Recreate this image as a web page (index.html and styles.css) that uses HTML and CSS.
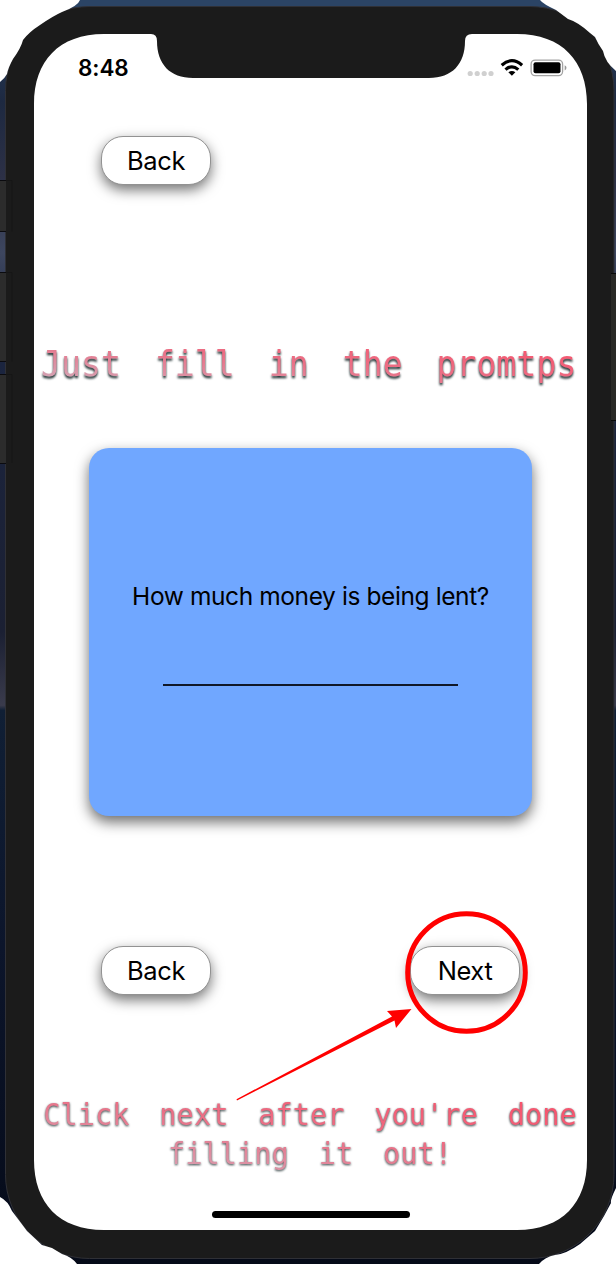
FILE: index.html
```html
<!DOCTYPE html>
<html lang="en">
<head>
<meta charset="utf-8">
<title>Lending prompts</title>
<link rel="stylesheet" href="styles.css">
</head>
<body>
<div class="stage">
  <svg class="device" viewBox="0 0 616 1264" aria-hidden="true">
    <defs>
      <linearGradient id="wall" x1="0" y1="0" x2="0" y2="1">
        <stop offset="0" stop-color="#2b4465"/>
        <stop offset=".08" stop-color="#1d2941"/>
        <stop offset=".14" stop-color="#2c3046"/>
        <stop offset=".2" stop-color="#3d465f"/>
        <stop offset=".27" stop-color="#1b2540"/>
        <stop offset=".5" stop-color="#1b2033"/>
        <stop offset=".558" stop-color="#3a3b4c"/>
        <stop offset=".562" stop-color="#101f35"/>
        <stop offset=".75" stop-color="#0c152b"/>
        <stop offset="1" stop-color="#050a18"/>
      </linearGradient>
    </defs>
    <rect width="616" height="1264" fill="url(#wall)"/>
    <rect width="616" height="7" fill="#2b4465"/>
    <rect x="5.5" y="6.5" width="608.5" height="1252" rx="84" fill="#1b1b1b" stroke="#2f3036"/>
    <path d="M0 181H6V231H0zM0 273H6V361H0zM0 375H6V463H0z" fill="#2c2c2c"/>
    <path d="M6 180.500H12V231.500M6 272.500H12V361.500M6 374.500H12V463" fill="none" stroke="#161616"/>
    <path d="M0 180.500H6M0 231.500H6M0 272.500H6M0 361.500H6M0 374.500H6M0 463.500H6" fill="none" stroke="#0b0b0f"/>
    <path d="M611 274H616V420H611z" fill="#292926"/>
    <path d="M611 273.500H616M611 420.500H616" stroke="#080808"/>
    <path d="M0 0H80Q78 6 62 12Q53 16 40 25Q29 32 23 40Q21 48 13 59Q8 68 7 74Q5 78 0 82zM540 0Q543 4 556 10L568 19Q578 22 590 33L595 37Q598 44 603 51Q605 62 616 71V0zM0 1197Q8 1201 12 1211L27 1231L42 1245L52 1248L62 1254Q72 1257 77 1264H0zM616 1188Q610 1200 611 1203L604 1216L595 1231L580 1244Q566 1254 555 1255Q545 1257 539 1264H616z" fill="#fff"/>
    <path d="M118 34H151Q157 34 157 41C157 64 170 78 193 78H429C452 78 465 64 465 41Q465 34 472 34H517C562 34 587 61 587 104V1160C587 1203 562 1230 517 1230H104C59 1230 34 1203 34 1160V104C34 61 59 34 104 34z" fill="#fff"/>
  </svg>

  <main class="screen">
    <header class="status">
      <span class="time">8:48</span>
      <svg class="indicators" viewBox="0 0 100 20" width="100" height="20" aria-hidden="true">
        <g fill="#d0d0d0"><circle cx="3.200" cy="15.500" r="2.600"/><circle cx="10.200" cy="15.500" r="2.600"/><circle cx="17.200" cy="15.500" r="2.600"/><circle cx="24" cy="15.500" r="2.600"/></g>
        <g fill="none" stroke="#000" stroke-width="3.200"><path d="M34.700 7.200Q44.900-1.800 55.100 7.200"/><path d="M38.500 11.600Q44.900 6 51.300 11.600"/></g>
        <path d="M41.400 14.300Q44.900 11.500 48.400 14.300L44.900 17.800z"/>
        <rect x="64.100" y="2.100" width="31.500" height="15.500" rx="4" fill="none" stroke="#a3a3a3" stroke-width="1.300"/>
        <rect x="66.500" y="4.300" width="27" height="11" rx="2"/>
        <path d="M97.700 7.200Q99.500 8 99.500 9.800T97.700 12.500z" fill="#999"/>
      </svg>
    </header>
    <button class="pill top-back">Back</button>
    <h1 class="fancy title">Just  fill  in  the  promtps</h1>
    <section class="card">
      <label class="question" for="amount">How much money is being lent?</label>
      <input class="answer" id="amount" type="text">
    </section>
    <nav class="actions">
      <button class="pill">Back</button>
      <button class="pill">Next</button>
    </nav>
    <p class="fancy hint">Click  next  after  you're  done
filling  it  out!</p>
    <div class="home"></div>
  </main>

  <svg class="callout" viewBox="0 0 616 1264" aria-hidden="true">
    <circle cx="466.500" cy="972.500" r="58.800" fill="none" stroke="#f00" stroke-width="5"/>
    <path d="M236.500 1099.200L392 1016.500L387 1011L411.500 1009L396 1028L394.500 1020.500L237 1100.500z" fill="#f00"/>
  </svg>
</div>
</body>
</html>
```
FILE: styles.css
```css
* { box-sizing: border-box; }
body { margin: 0; background: #fff; }
.stage { position: relative; width: 616px; height: 1264px; overflow: hidden; font-family: Inter, "Liberation Sans", sans-serif; color: #000; }
.device, .callout { position: absolute; inset: 0; width: 616px; height: 1264px; pointer-events: none; }
.screen { position: relative; display: flex; flex-direction: column; margin: 34px 29px 34px 34px; width: 553px; height: 1196px; }
.status { display: flex; justify-content: space-between; height: 102px; padding: 24px 20px 0 44px; }
.time { font-size: 22.5px; line-height: 20px; font-weight: 600; letter-spacing: -.1px; }
.pill { width: 110px; height: 49px; flex: none; padding: 0 0 0 0; border: 1.5px solid #929292; border-radius: 22px; background: #fff; box-shadow: 0 5px 13px rgba(0,0,0,.55); font: 25.5px/1 Inter, "Liberation Sans", sans-serif; letter-spacing: -.4px; color: #000; }
.top-back { margin-left: 67px; }
.fancy { font-family: "DejaVu Sans Mono", monospace; font-weight: 400; white-space: pre; color: transparent; background-image: linear-gradient(to top right, #cdb2c1 0%, #ea7086 50%, #fa4c66 100%); background-clip: text; -webkit-background-clip: text; filter: drop-shadow(0 2px 1px rgba(10,28,30,.95)); }
.title { margin: 156px 0 0 7px; width: 541px; height: 46px; font-size: 33.2px; line-height: 46px; word-spacing: -3px; transform: scaleY(1.06); }
.card { display: flex; flex-direction: column; align-items: center; width: 443px; height: 368px; flex: none; margin: 61px 0 0 55px; padding-top: 132px; border-radius: 20px; background: #70a7ff; box-shadow: 0 6px 14px rgba(0,0,0,.58); }
.question { font-size: 24.5px; line-height: 32px; letter-spacing: -.4px; white-space: nowrap; }
.answer { width: 295px; height: 37px; margin-top: 37px; padding: 0; border: 0; border-bottom: 2px solid #101828; background: transparent; font: inherit; outline: none; }
.actions { display: flex; justify-content: space-between; margin: 130px 67px 0 67px; }
.hint { margin: 101px 0 0 7px; width: 538px; height: 76px; font-size: 28.7px; line-height: 38px; text-align: center; word-spacing: -2.4px; transform: scaleY(1.05); filter: drop-shadow(0 1.5px 1px rgba(10,28,30,.85)); }
.home { width: 198px; height: 7px; flex: none; margin: auto 0 12px 178px; border-radius: 4px; background: #000; }
```
